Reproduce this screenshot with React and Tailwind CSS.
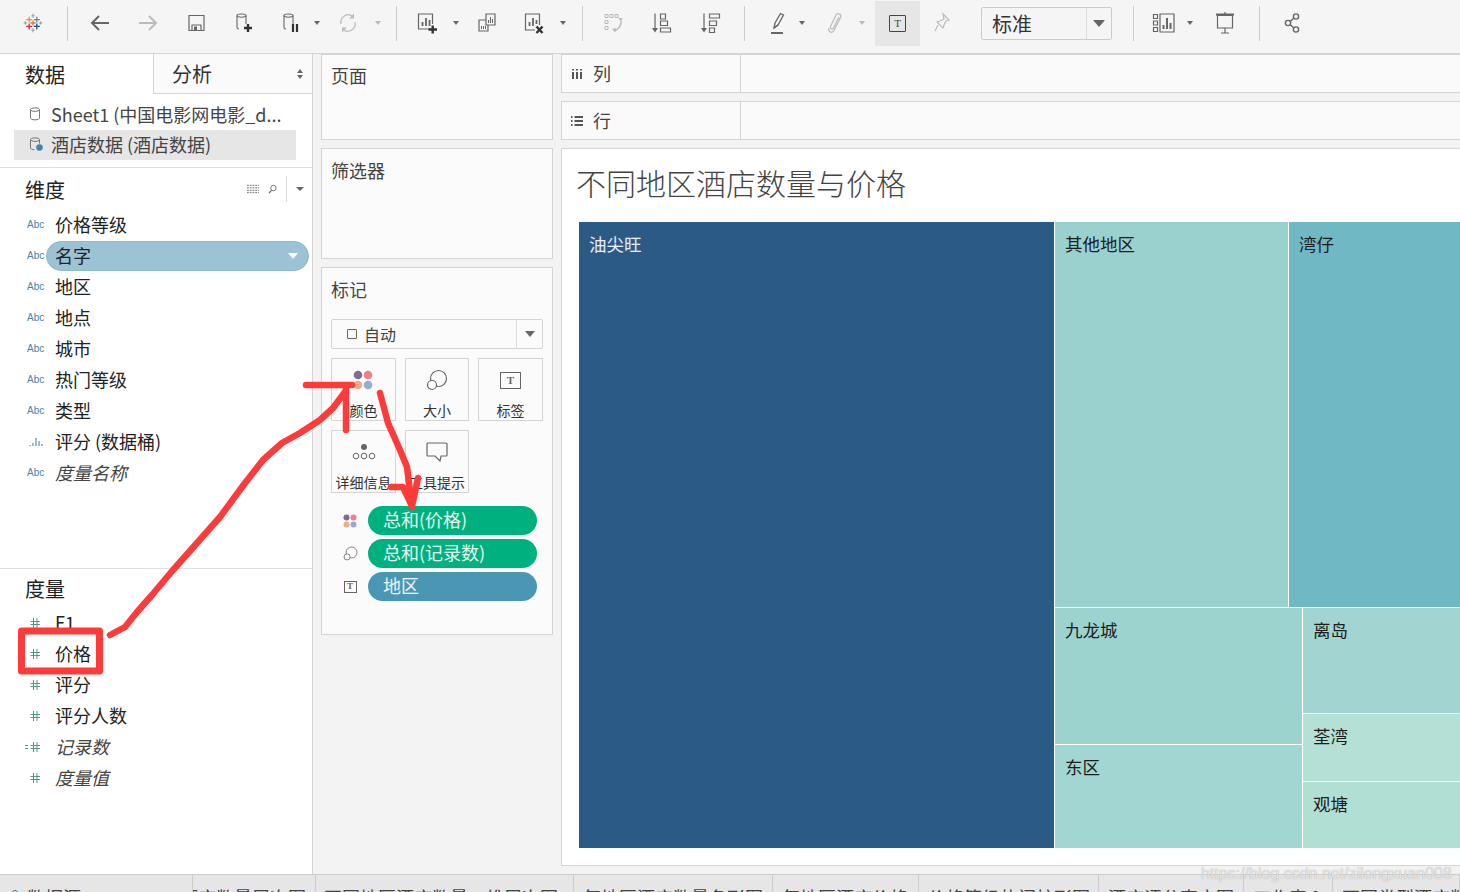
const grayStroke = { fill: "none", stroke: "#666", strokeWidth: 1.2 };

const Icon = ({ children, className = "" }) => (
  <svg viewBox="0 0 24 24" className={`w-6 h-6 shrink-0 ${className}`}>
    {children}
  </svg>
);

const Caret = ({ className = "", light }) => (
  <span className={`w-2 shrink-0 flex justify-center ${className}`}>
    <span className={`border-x-[3px] border-x-transparent border-t-[4px] ${light ? "border-t-[#bbb]" : "border-t-[#666]"}`}></span>
  </span>
);

const Sep = ({ className = "" }) => <span className={`w-px h-[35px] shrink-0 bg-[#ccc] ${className}`}></span>;

const Logo = () => (
  <Icon>
    <g strokeWidth="1.5" fill="none" transform="translate(1.8 1.8) scale(0.85)">
      <path d="M12 9v6M9 12h6" stroke="#e8762d" />
      <path d="M7.5 4.500v7M4 8h7" stroke="#f28e2b" />
      <path d="M16.5 4.500v7M13 8h7" stroke="#5b879b" />
      <path d="M7.5 12.500v7M4 16h7" stroke="#d3293f" />
      <path d="M16.5 12.500v7M13 16h7" stroke="#1f4e79" />
      <path d="M12 1v5M10 3.500h4M12 18v5M10 20.500h4" stroke="#7099a6" strokeWidth="1" />
      <path d="M3 10v4M1 12h4M21 10v4M19 12h4" stroke="#7099a6" strokeWidth="1" />
    </g>
  </Icon>
);

const Cylinder = ({ x = 7, y = 5, w = 9, h = 15, color = "#666" }) => (
  <g fill="none" stroke={color} strokeWidth="1.1">
    <ellipse cx={x + w / 2} cy={y + 1.6} rx={w / 2} ry="1.6" />
    <path d={`M${x} ${y + 1.6}V${y + h - 1.5}Q${x} ${y + h} ${x + 2} ${y + h}M${x + w} ${y + 1.6}V${y + h - 5}`} />
  </g>
);

const ToolbarIcons = {
  back: (
    <Icon>
      <path d="M21 12H5M11 5l-7 7 7 7" fill="none" stroke="#666" strokeWidth="2" />
    </Icon>
  ),
  forward: (
    <Icon>
      <path d="M3 12h16M13 5l7 7-7 7" fill="none" stroke="#bbb" strokeWidth="2" />
    </Icon>
  ),
  save: (
    <Icon>
      <path d="M5 4.500h15v15H5z" {...grayStroke} />
      <path d="M8 19v-5h9v5" {...grayStroke} />
      <path d="M10 15.500h3v3.500h-3z" fill="#666" />
    </Icon>
  ),
  addData: (
    <Icon>
      <Cylinder x={6} y={3} h={15} />
      <path d="M13 17h8M17 13v8" stroke="#333" strokeWidth="2.400" fill="none" />
    </Icon>
  ),
  pause: (
    <Icon>
      <Cylinder x={6} y={3} h={15} />
      <path d="M15 13v8M19 13v8" stroke="#333" strokeWidth="2.200" fill="none" />
    </Icon>
  ),
  refresh: (
    <Icon>
      <path d="M5 13a7.500 7.500 0 0 1 12-7.500M19 11a7.500 7.500 0 0 1-12 7.500" fill="none" stroke="#bbb" strokeWidth="1.300" />
      <path d="M18 2.500v5h-5zM6 21.500v-5h5z" fill="#bbb" />
    </Icon>
  ),
  newSheet: (
    <Icon>
      <path d="M15 18H3.500V3h14v10" {...grayStroke} />
      <path d="M7.500 15v-4M11 15V7M14.500 15v-6" stroke="#666" strokeWidth="1.800" fill="none" />
      <path d="M13.500 18.500h8.500M17.700 14.500v8" stroke="#333" strokeWidth="2.400" fill="none" />
    </Icon>
  ),
  duplicate: (
    <Icon>
      <path d="M11 3h9v11h-9z" {...grayStroke} fill="#f5f5f5" />
      <path d="M13.500 12V9M15.500 12V6M17.500 12V8" stroke="#666" strokeWidth="1" fill="none" />
      <path d="M11 9H4v11h9v-6" {...grayStroke} />
      <path d="M6.500 18v-3M8.500 18v-3M10.500 18v-3" stroke="#666" strokeWidth="1" fill="none" />
    </Icon>
  ),
  clear: (
    <Icon>
      <path d="M13 19H3.500V3h14v11" {...grayStroke} />
      <path d="M7.500 15v-4M11 15V7M14.500 13V9" stroke="#666" strokeWidth="1.800" fill="none" />
      <path d="M14.500 15.500l6 6.500M20.500 15.500l-6 6.500" stroke="#333" strokeWidth="2.400" fill="none" />
    </Icon>
  ),
  swap: (
    <Icon>
      <g fill="none" stroke="#bbb" strokeWidth="1">
        <path d="M4 3.500h3v3H4zM9 3.500h3v3H9zM14 3.500h3v3h-3zM4 9.500h3v3H4zM4 15.500h3v3H4z" />
        <path d="M20 9a10 10 0 0 1-7 11" strokeWidth="1.400" />
      </g>
      <path d="M17 6.500l2.500 3.500 2.500-2.500zM11 18l4-1-.5 4.500z" fill="#bbb" />
    </Icon>
  ),
  sortAsc: (
    <Icon>
      <path d="M6 2.500v16" stroke="#666" strokeWidth="1.200" />
      <path d="M3 17h6l-3 4.500z" fill="#666" />
      <path d="M11.500 3h5v5h-5zM11.500 10h7v4.500h-7zM11.500 17h10v4h-10z" {...grayStroke} />
    </Icon>
  ),
  sortDesc: (
    <Icon>
      <path d="M6 2.500v16" stroke="#666" strokeWidth="1.200" />
      <path d="M3 17h6l-3 4.500z" fill="#666" />
      <path d="M11.500 3h10v4h-10zM11.500 10h7v4.500h-7zM11.500 17h5v4.500h-5z" {...grayStroke} />
    </Icon>
  ),
  highlight: (
    <Icon>
      <path d="M9 17l1-5 5.500-9.500 3 1.500-5.500 10z" fill="none" stroke="#666" strokeWidth="1.300" />
      <path d="M9 17l4-3" stroke="#666" strokeWidth="1.300" />
      <path d="M6 21h12v2H6z" fill="#666" />
    </Icon>
  ),
  clip: (
    <Icon>
      <path
        d="M15 6l-5.500 11c-1 2-4 .5-3-1.500L12 4c1.500-3 6-.5 4.500 2.500L10 19.500c-2 3.500-6.500 1-5-2.500"
        fill="none"
        stroke="#bbb"
        strokeWidth="1.200"
        transform="translate(2 0)"
      />
    </Icon>
  ),
  pin: (
    <Icon>
      <path d="M13 3l6 6-3 1-2 4-1 3-6-6 3-1 4-2zM8 14l-3 6" fill="none" stroke="#bbb" strokeWidth="1.200" />
    </Icon>
  ),
  showMe: (
    <Icon>
      <path d="M1.500 3.500h4v4h-4zM1.500 10h4v4h-4zM1.500 16.500h4v4h-4zM8 3h14v18H8z" {...grayStroke} />
      <path d="M11.500 18v-4M15 18V7M18.500 18v-6" stroke="#666" strokeWidth="2" fill="none" />
    </Icon>
  ),
  present: (
    <Icon>
      <path d="M4.500 4.500h15V17h-15z" {...grayStroke} />
      <path d="M3 3.500h18" stroke="#666" strokeWidth="2" />
      <path d="M12 1v2M12 17v5M8 22h8" {...grayStroke} />
    </Icon>
  ),
  share: (
    <Icon>
      <g {...grayStroke} strokeWidth="1.400">
        <circle cx="16" cy="5.500" r="2.600" />
        <circle cx="8" cy="12" r="2.600" />
        <circle cx="16" cy="18.500" r="2.600" />
        <path d="M10 10.500l4-3.500M10 13.500l4 3.500" />
      </g>
    </Icon>
  ),
};

const Toolbar = () => (
  <div className="h-[54px] shrink-0 flex items-center pb-[7px] bg-[#f5f5f5] border-b border-[#d4d4d4]">
    <span className="ml-[21px]"><Logo /></span>
    <Sep className="ml-[22px]" />
    <span className="ml-[20px]">{ToolbarIcons.back}</span>
    <span className="ml-[24px]">{ToolbarIcons.forward}</span>
    <span className="ml-[24px]">{ToolbarIcons.save}</span>
    <span className="ml-[23px]">{ToolbarIcons.addData}</span>
    <span className="ml-[23px]">{ToolbarIcons.pause}</span>
    <Caret className="ml-[11px]" />
    <span className="ml-[15px]">{ToolbarIcons.refresh}</span>
    <Caret light className="ml-[14px]" />
    <Sep className="ml-[14px]" />
    <span className="ml-[18px]">{ToolbarIcons.newSheet}</span>
    <Caret className="ml-[13px]" />
    <span className="ml-[15px]">{ToolbarIcons.duplicate}</span>
    <span className="ml-[23px]">{ToolbarIcons.clear}</span>
    <Caret className="ml-[13px]" />
    <Sep className="ml-[15px]" />
    <span className="ml-[18px]">{ToolbarIcons.swap}</span>
    <span className="ml-[24px]">{ToolbarIcons.sortAsc}</span>
    <span className="ml-[25px]">{ToolbarIcons.sortDesc}</span>
    <Sep className="ml-[22px]" />
    <span className="ml-[20px]">{ToolbarIcons.highlight}</span>
    <Caret className="ml-[9px]" />
    <span className="ml-[16px]">{ToolbarIcons.clip}</span>
    <Caret light className="ml-[12px]" />
    <div className="ml-[9px] w-[45px] h-[45px] bg-[#e6e6e6] flex items-center justify-center">
      <span className="w-[17px] h-[17px] border border-[#444] rounded-[1px] flex items-center justify-center text-[11px] leading-none font-['Liberation_Serif',serif] text-[#444]">
        T
      </span>
    </div>
    <span className="ml-[10px]">{ToolbarIcons.pin}</span>
    <div className="ml-[27px] w-[131px] h-[33px] flex border border-[#ccc] rounded-[2px] text-[20px] text-[#333]">
      <span className="w-[104px] pl-[10px] leading-[31px]">标准</span>
      <span className="flex-1 border-l border-[#ddd] flex items-center justify-center">
        <span className="border-x-[6px] border-x-transparent border-t-[7px] border-t-[#666]"></span>
      </span>
    </div>
    <Sep className="ml-[21px]" />
    <span className="ml-[18px]">{ToolbarIcons.showMe}</span>
    <Caret className="ml-[10px]" />
    <span className="ml-[19px]">{ToolbarIcons.present}</span>
    <Sep className="ml-[22px]" />
    <span className="ml-[20px]">{ToolbarIcons.share}</span>
  </div>
);

const Hash = ({ prefix }) => (
  <svg viewBox="0 0 18 12" className="w-[18px] h-[12px] shrink-0">
    {prefix && <path d="M0 4.500h3M0 7.500h3" stroke="#4a9e80" strokeWidth="1" />}
    <path d="M8.500 1v10M12 1v10M5.500 4.500h9.500M5.500 7.500h9.500" stroke="#4a9e80" strokeWidth="1" fill="none" />
  </svg>
);

const FieldAbc = () => (
  <span className="w-[17px] shrink-0 text-[10px] leading-none text-[#4a82a0] font-['Liberation_Sans',sans-serif]">Abc</span>
);

const FieldBars = () => (
  <svg viewBox="0 0 17 10" className="w-[17px] h-[10px] shrink-0">
    <path d="M3 9V8M6 9V6M9 9V1M12 9V4M15 9V7" stroke="#4a82a0" strokeWidth="1.100" />
  </svg>
);

const dimensions = [
  { name: "价格等级" },
  { name: "名字", selected: true },
  { name: "地区" },
  { name: "地点" },
  { name: "城市" },
  { name: "热门等级" },
  { name: "类型" },
  { name: "评分 (数据桶)", bars: true },
  { name: "度量名称", italic: true },
];

const measures = [
  { name: "F1" },
  { name: "价格" },
  { name: "评分" },
  { name: "评分人数" },
  { name: "记录数", italic: true, prefix: true },
  { name: "度量值", italic: true },
];

const DataPanel = () => (
  <div className="w-[313px] shrink-0 bg-white border-r border-[#d4d4d4] flex flex-col">
    <div className="h-[40px] flex shrink-0">
      <div className="w-[153px] pl-[25px] text-[20px] leading-[42px] text-[#222]">数据</div>
      <div className="flex-1 flex items-center justify-between pl-[18px] pr-[9px] pt-[1px] bg-[#fafafa] border-l border-b border-[#d4d4d4] text-[20px] text-[#333]">
        <span>分析</span>
        <svg viewBox="0 0 6 10" className="w-[6px] h-[10px]">
          <path d="M3 0l3 4H0zM3 10L0 6h6z" fill="#666" />
        </svg>
      </div>
    </div>

    <div className="h-[74px] shrink-0 border-b border-[#e0e0e0] flex flex-col pt-[6px]">
      <div className="h-[30px] flex items-center pl-[29px] pb-[2px] text-[18px] text-[#444] whitespace-nowrap">
        <svg viewBox="0 0 12 14" className="w-[12px] h-[14px] shrink-0">
          <ellipse cx="6" cy="2.600" rx="4.500" ry="1.800" fill="none" stroke="#777" />
          <path d="M1.500 2.600v8.500q0 1.800 4.500 1.800t4.500-1.800V2.600" fill="none" stroke="#777" />
        </svg>
        <span className="ml-[10px]">Sheet1 (中国电影网电影_d...</span>
      </div>
      <div className="h-[30px] ml-[14px] w-[282px] flex items-center pl-[15px] pb-[2px] bg-[#e6e6e6] text-[18px] text-[#444] whitespace-nowrap">
        <svg viewBox="0 0 14 14" className="w-[14px] h-[14px] shrink-0">
          <ellipse cx="6" cy="2.600" rx="4.500" ry="1.800" fill="none" stroke="#777" />
          <path d="M1.500 2.600v8.500q0 1.500 4 1.700M10.500 2.600v4" fill="none" stroke="#777" />
          <circle cx="10.500" cy="10.500" r="3.300" fill="#3d87ad" />
        </svg>
        <span className="ml-[8px]">酒店数据 (酒店数据)</span>
      </div>
    </div>

    <div className="h-[401px] shrink-0 border-b border-[#e0e0e0] flex flex-col">
      <div className="h-[41px] shrink-0 flex items-center pl-[25px] text-[20px] text-[#222]">
        <span className="flex-1 pt-[2px]">维度</span>
        <svg viewBox="0 0 13 10" className="w-[12px] h-[10px] mr-[9px]">
          <path d="M0 1h13M0 3.700h13M0 6.400h13M0 9h13" stroke="#666" strokeDasharray="2 1" />
        </svg>
        <svg viewBox="0 0 10 10" className="w-[9px] h-[10px] mr-[9px]">
          <circle cx="6" cy="4" r="3" fill="none" stroke="#666" />
          <path d="M4 6.500L1 9.500" stroke="#666" strokeWidth="1.300" />
        </svg>
        <span className="w-px h-[26px] bg-[#ddd] mr-[9px]"></span>
        <span className="w-0 h-0 mr-[8px] border-x-[4px] border-x-transparent border-t-[4px] border-t-[#666]"></span>
      </div>
      <div className="flex flex-col">
        {dimensions.map((d) => (
          <div key={d.name} className="h-[31px] flex items-center pl-[27px] text-[18px] text-[#222]">
            {d.bars ? <FieldBars /> : <FieldAbc />}
            {d.selected ? (
              <span className="ml-[2px] w-[263px] h-[30px] rounded-full bg-[#9bc3d5] border border-[#8db9cc] pl-[8px] pr-[10px] flex items-center justify-between">
                名字
                <span className="border-x-[5px] border-x-transparent border-t-[6px] border-t-white"></span>
              </span>
            ) : (
              <span className={`ml-[11px] ${d.italic ? "italic text-[#444]" : ""}`}>{d.name}</span>
            )}
          </div>
        ))}
      </div>
    </div>

    <div className="flex flex-col">
      <div className="h-[38px] flex items-center pl-[25px] pt-[2px] text-[20px] text-[#222]">度量</div>
      <div className="flex flex-col">
        {measures.map((m) => (
          <div key={m.name} className="h-[31px] flex items-center pl-[25px] text-[18px] text-[#222]">
            <Hash prefix={m.prefix} />
            <span className={`ml-[12px] ${m.italic ? "italic text-[#444]" : ""}`}>{m.name}</span>
          </div>
        ))}
      </div>
    </div>
  </div>
);

const Dots = ({ size = "w-[14px] h-[14px]" }) => (
  <svg viewBox="0 0 14 14" className={size}>
    <circle cx="3.500" cy="3.500" r="3" fill="#7f6a94" />
    <circle cx="10.500" cy="3.500" r="3" fill="#f47c8a" />
    <circle cx="3.500" cy="10.500" r="3" fill="#f2ab80" />
    <circle cx="10.500" cy="10.500" r="3" fill="#8eaed4" />
  </svg>
);

const Size = ({ size = "w-[22px] h-[22px]" }) => (
  <svg viewBox="0 0 22 22" className={size}>
    <circle cx="12.500" cy="9.500" r="8" fill="none" stroke="#666" strokeWidth="1.200" />
    <circle cx="6" cy="16" r="4.500" fill="#fbfbfb" stroke="#666" strokeWidth="1.200" />
  </svg>
);

const MarkTile = ({ label, children }) => (
  <div className="h-[63px] border border-[#d4d4d4] bg-[#fbfbfb] flex flex-col items-center">
    <div className="h-[42px] flex items-center justify-center shrink-0">{children}</div>
    <span className="text-[14px] leading-[18px] text-[#333] whitespace-nowrap">{label}</span>
  </div>
);

const Pill = ({ icon, color, text }) => (
  <div className="h-[29px] flex items-center">
    <div className="w-[37px] flex justify-center shrink-0 pl-[1px]">{icon}</div>
    <div className={`w-[169px] h-[29px] rounded-full pl-[15px] text-[18px] leading-[27px] text-white/90 ${color}`}>{text}</div>
  </div>
);

const MarksCard = () => (
  <div className="h-[368px] mt-[8px] border border-[#d4d4d4] bg-[#fbfbfb] px-[9px] flex flex-col">
    <div className="h-[42px] shrink-0 text-[18px] leading-[43px] text-[#444]">标记</div>
    <div className="h-[30px] mt-[9px] flex border border-[#d4d4d4] rounded-[2px] shrink-0 bg-[#fbfbfb]">
      <div className="flex-1 flex items-center pl-[15px] text-[16px] text-[#444]">
        <span className="w-[10px] h-[10px] border border-[#666] rounded-[1px] mr-[7px]"></span>
        自动
      </div>
      <div className="w-[26px] border-l border-[#ddd] flex items-center justify-center">
        <span className="border-x-[5px] border-x-transparent border-t-[6px] border-t-[#666]"></span>
      </div>
    </div>
    <div className="mt-[9px] grid grid-cols-[65px_64px_65px] gap-x-[9px] gap-y-[9px] shrink-0">
      <MarkTile label="颜色"><span className="-translate-x-[1px]"><Dots size="w-[20px] h-[20px]" /></span></MarkTile>
      <MarkTile label="大小"><Size /></MarkTile>
      <MarkTile label="标签">
        <span className="w-[21px] h-[17px] border border-[#666] flex items-center justify-center text-[11px] leading-none font-bold font-['Liberation_Serif',serif] text-[#666]">T</span>
      </MarkTile>
      <MarkTile label="详细信息">
        <svg viewBox="0 0 24 18" className="w-[24px] h-[18px]">
          <circle cx="12" cy="4" r="3" fill="#666" />
          <circle cx="4" cy="13" r="2.800" fill="none" stroke="#666" />
          <circle cx="12" cy="13" r="2.800" fill="none" stroke="#666" />
          <circle cx="20" cy="13" r="2.800" fill="none" stroke="#666" />
        </svg>
      </MarkTile>
      <MarkTile label="工具提示">
        <svg viewBox="0 0 22 20" className="w-[22px] h-[20px]">
          <path d="M2 1h18a1 1 0 0 1 1 1v11a1 1 0 0 1-1 1h-5l-1 5-5-5H2a1 1 0 0 1-1-1V2a1 1 0 0 1 1-1z" fill="none" stroke="#666" strokeWidth="1.200" />
        </svg>
      </MarkTile>
    </div>
    <div className="mt-[13px] flex flex-col gap-[4px]">
      <Pill icon={<Dots />} color="bg-[#00b180]" text="总和(价格)" />
      <Pill icon={<Size size="w-[15px] h-[15px]" />} color="bg-[#00b180]" text="总和(记录数)" />
      <Pill
        icon={
          <span className="w-[13px] h-[12px] border border-[#666] flex items-center justify-center text-[9px] leading-none font-bold font-['Liberation_Serif',serif] text-[#666]">T</span>
        }
        color="bg-[#4a96b5]"
        text="地区"
      />
    </div>
  </div>
);

const CardsColumn = () => (
  <div className="w-[232px] ml-[8px] shrink-0 flex flex-col">
    <div className="h-[86px] border border-[#d4d4d4] bg-[#fbfbfb] pl-[9px] text-[18px] leading-[41px] text-[#444]">页面</div>
    <div className="h-[111px] mt-[8px] border border-[#d4d4d4] bg-[#fbfbfb] pl-[9px] text-[18px] leading-[42px] text-[#444]">筛选器</div>
    <MarksCard />
  </div>
);

const Shelf = ({ icon, label, className = "" }) => (
  <div className={`h-[39px] flex border-y border-l border-[#d4d4d4] bg-[#fafafa] ${className}`}>
    <div className="w-[179px] shrink-0 flex items-center pl-[9px] border-r border-[#d4d4d4] text-[18px] text-[#444]">
      {icon}
      <span className="ml-[10px]">{label}</span>
    </div>
    <div className="flex-1"></div>
  </div>
);

const Cell = ({ label, bg, dark, className = "" }) => (
  <div className={`${bg} ${className} px-[10px] pt-[9px] text-[17.500px] leading-[26px] ${dark ? "text-white/90" : "text-[#1c1c1c]"}`}>
    {label}
  </div>
);

const Treemap = () => (
  <div className="ml-[17px] mt-[12px] h-[626px] flex gap-px">
    <Cell label="油尖旺" bg="bg-[#2c5a87]" dark className="w-[475px] shrink-0" />
    <div className="flex-1 flex flex-col gap-px">
      <div className="h-[385px] flex gap-px shrink-0">
        <Cell label="其他地区" bg="bg-[#9ad1cf]" className="w-[233px] shrink-0" />
        <Cell label="湾仔" bg="bg-[#6fb8c4]" className="flex-1" />
      </div>
      <div className="flex-1 flex gap-px">
        <div className="w-[247px] shrink-0 flex flex-col gap-px">
          <Cell label="九龙城" bg="bg-[#9dd3cf]" className="h-[136px] shrink-0" />
          <Cell label="东区" bg="bg-[#a1d6d2]" className="flex-1" />
        </div>
        <div className="flex-1 flex flex-col gap-px">
          <Cell label="离岛" bg="bg-[#a2d5d1]" className="h-[105px] shrink-0" />
          <Cell label="荃湾" bg="bg-[#b5e0d5]" className="h-[67px] shrink-0" />
          <Cell label="观塘" bg="bg-[#b2dfd4]" className="flex-1" />
        </div>
      </div>
    </div>
  </div>
);

const ViewColumn = () => (
  <div className="flex-1 ml-[8px] flex flex-col min-w-0">
    <Shelf
      label="列"
      icon={
        <svg viewBox="0 0 12 12" className="w-[12px] h-[12px]">
          <path d="M2 1v1.500M6 1v1.500M10 1v1.500M2 4v7M6 4v7M10 4v7" stroke="#555" strokeWidth="2" />
        </svg>
      }
    />
    <Shelf
      label="行"
      className="mt-[8px]"
      icon={
        <svg viewBox="0 0 12 12" className="w-[12px] h-[12px]">
          <path d="M0 2h1.500M0 6h1.500M0 10h1.500M3.500 2H12M3.500 6H12M3.500 10H12" stroke="#555" strokeWidth="2" />
        </svg>
      }
    />
    <div className="h-[718px] mt-[8px] bg-white border-y border-l border-[#d4d4d4]">
      <h1 className="h-[61px] pl-[14px] pt-[10px] text-[30px] leading-[46px] font-light text-[#444] whitespace-nowrap">不同地区酒店数量与价格</h1>
      <Treemap />
    </div>
  </div>
);

const tabs = [
  { name: "数据源", w: "w-[193px]", pad: "pl-[27px]", icon: true },
  { name: "酒店数量层次图", w: "w-[123px]", pad: "justify-end pr-[9px]" },
  { name: "不同地区酒店数量二维层次图", w: "w-[258px]", pad: "pl-[8px]" },
  { name: "每地区酒店数量条形图", w: "w-[199px]", pad: "pl-[9px]" },
  { name: "每地区酒店价格", w: "w-[146px]", pad: "pl-[9px]" },
  { name: "价格等级热门柱形图", w: "w-[180px]", pad: "pl-[9px]" },
  { name: "酒店评分直方图", w: "w-[145px]", pad: "pl-[9px]" },
  { name: "工作表 9", w: "w-[89px]", pad: "pl-[9px]" },
  { name: "不同类型酒店数", w: "w-[127px]", pad: "pl-[9px]" },
];

const TabBar = () => (
  <div className="h-[40px] shrink-0 flex bg-[#e6e6e6] border-t border-[#ccc] overflow-hidden">
    {tabs.map((t) => (
      <div
        key={t.name}
        className={`${t.w} ${t.pad} relative shrink-0 flex border-r border-[#ccc] text-[18px] leading-[26px] pt-[9px] text-[#444] overflow-hidden whitespace-nowrap`}
      >
        {t.icon && <span className="absolute left-[12px] top-[15px] w-[6px] h-[6px] border border-[#666] rounded-full"></span>}
        {t.name}
      </div>
    ))}
  </div>
);

const Annotations = () => (
  <svg viewBox="0 0 1460 892" className="absolute inset-0 w-[1460px] h-[892px] pointer-events-none">
    <g fill="none" stroke="#fe3b3b" strokeLinecap="round" strokeLinejoin="round">
      <rect x="21.500" y="631" width="78" height="40" strokeWidth="7" strokeLinecap="butt" />
      <path
        d="M110 635L125 627L137 612L152 595L173 570L197 543L220 517L245 483L263 460L282 443L300 433L320 420L333 408L345 392"
        strokeWidth="6.500"
      />
      <path d="M306 385H352M346 385V430" strokeWidth="6.500" />
      <path d="M380 393L388 423L400 450L407 467L412 507" strokeWidth="6.500" />
      <path d="M391 487L403 487L412 506L418 478" strokeWidth="6.500" />
    </g>
  </svg>
);

export default function App() {
  return (
    <div className="relative w-[1460px] h-[892px] overflow-hidden flex flex-col bg-[#f3f3f3] font-['Noto_Sans_CJK_SC','Noto_Sans',sans-serif]">
      <Toolbar />
      <div className="h-[820px] shrink-0 flex">
        <DataPanel />
        <CardsColumn />
        <ViewColumn />
      </div>
      <TabBar />
      <Annotations />
      <div className="absolute left-[1201px] top-[864px] text-[16px] leading-[20px] text-white/70 whitespace-nowrap [text-shadow:0_0_1px_#999] font-['Liberation_Sans',sans-serif]">
        https://blog.csdn.net/zilongxuan008
      </div>
    </div>
  );
}
